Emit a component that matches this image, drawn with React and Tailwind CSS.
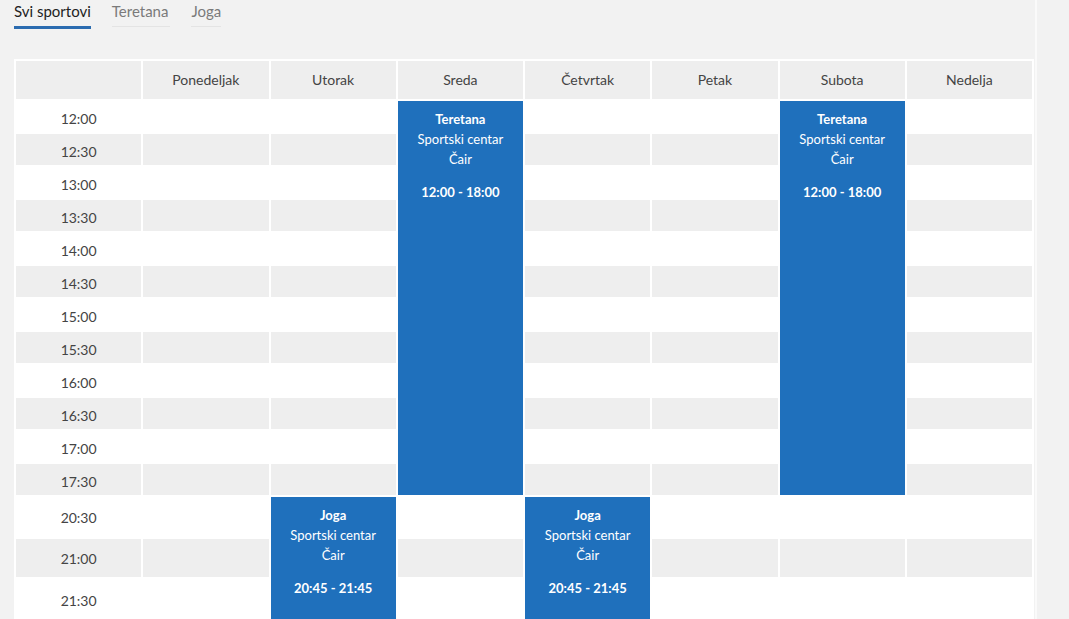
import React from 'react'

const days = ['Ponedeljak', 'Utorak', 'Sreda', 'Četvrtak', 'Petak', 'Subota', 'Nedelja']
const times = [
  '12:00', '12:30', '13:00', '13:30', '14:00', '14:30', '15:00', '15:30',
  '16:00', '16:30', '17:00', '17:30', '20:30', '21:00', '21:30',
]

// sessions keyed by "rowIndex-dayIndex"; covered cells are skipped so the grid auto-places around the spans
const sessions = {
  '0-2': { name: 'Teretana', time: '12:00 - 18:00', span: 'row-span-12' },
  '0-5': { name: 'Teretana', time: '12:00 - 18:00', span: 'row-span-12' },
  '12-1': { name: 'Joga', time: '20:45 - 21:45', span: 'row-span-3' },
  '12-3': { name: 'Joga', time: '20:45 - 21:45', span: 'row-span-3' },
}

function covered(r, d) {
  if ((d === 2 || d === 5) && r > 0 && r < 12) return true
  if ((d === 1 || d === 3) && r > 12) return true
  return false
}

function Session({ s }) {
  return (
    <div className={`${s.span} bg-[#1f70bc] pt-2 text-center text-[13px] leading-5 text-white`}>
      <p className="font-bold">{s.name}</p>
      <p>Sportski centar</p>
      <p>Čair</p>
      <p className="mt-[13px] font-bold">{s.time}</p>
    </div>
  )
}

export default function App() {
  return (
    <div className="flex min-h-screen bg-[#f2f2f2] font-['Lato','Liberation_Sans',sans-serif]">
      <div className="w-[1035px] shrink-0">
        {/* Tabs */}
        <div className="ml-[14px] flex items-start gap-[21px] pt-[1px] text-[15px] leading-5">
          <button className="border-b-[3px] border-[#2b6cb0] pb-[5px] text-[#222]">Svi sportovi</button>
          <button className="border-b border-[#e4e4e4] pb-[5px] pr-[2px] text-[#7a7a7a]">Teretana</button>
          <button className="border-b border-[#e4e4e4] pb-[5px] text-[#7a7a7a]">Joga</button>
        </div>

        {/* Raspored */}
        <div className="ml-[14px] mt-[30px] grid w-[1020px] grid-cols-8 grid-rows-[38px_repeat(12,31px)_40px_38px_42px] gap-[2px] bg-white p-[2px] text-[14px] text-[#444]">
          <div className="bg-[#eeeeee]" />
          {days.map((d) => (
            <div key={d} className="flex items-center justify-center bg-[#eeeeee] pb-[2px]">{d}</div>
          ))}

          {times.map((t, r) => {
            const row = r % 2 === 1 ? 'bg-[#eeeeee]' : 'bg-white'
            return (
              <React.Fragment key={t}>
                <div className={`flex items-center justify-center ${row} ${r < 12 ? 'pt-[3px]' : ''}`}>{t}</div>
                {days.map((d, i) => {
                  const s = sessions[`${r}-${i}`]
                  if (s) return <Session key={d} s={s} />
                  if (covered(r, i)) return null
                  return <div key={d} className={row} />
                })}
              </React.Fragment>
            )
          })}
        </div>
      </div>
      <div className="w-[2px] shrink-0 bg-[#fafafa]" />
    </div>
  )
}
